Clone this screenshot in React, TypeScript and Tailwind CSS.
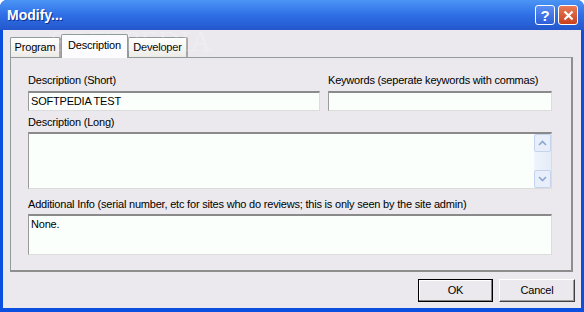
import { ReactNode } from "react";

const font = { fontFamily: '"Liberation Sans", Arial, sans-serif' };

const Sunken = ({ className, children }: { className: string; children?: ReactNode }) => (
	<div
		className={`border-t-2 border-l border-b border-r border-t-[#8a8a8a] border-l-[#9a9a9a] border-b-[#dcdcdc] border-r-[#dcdcdc] bg-[#fbfffb] ${className}`}
	>
		{children}
	</div>
);

const Chevron = ({ up }: { up?: boolean }) => (
	<svg width="9" height="6" viewBox="0 0 9 6">
		<path
			d={up ? "M1 5 L4.5 1.5 L8 5" : "M1 1 L4.5 4.5 L8 1"}
			fill="none"
			stroke="#8aa6d6"
			strokeWidth="1.6"
		/>
	</svg>
);

const Tab = ({ label, active, w }: { label: string; active?: boolean; w: string }) => (
	<div
		className={`${w} flex items-center justify-center border border-b-0 border-[#919b9c] rounded-t-[2px] text-black ${
			active
				? "h-[24px] -mb-px bg-[#fcfcfe] z-10 relative pb-[2px]"
				: "h-[20px] bg-gradient-to-b from-white to-[#ecebe6] border-r-2 border-r-[#a7a6aa]"
		}`}
	>
		{label}
	</div>
);

export default function App() {
	return (
		<div
			className="w-[584px] h-[312px] bg-[#0b4fe0] rounded-t-[7px] flex flex-col overflow-hidden relative text-[11px] tracking-[-0.2px]"
			style={font}
		>
			{/* title bar */}
			<div className="h-[30px] shrink-0 flex items-center pl-[7px] pr-[6px] bg-gradient-to-b from-[#4b95f5] via-[#2f6fe6] to-[#2457cc]">
				<span className="text-white font-bold text-[14px] tracking-normal [text-shadow:1px_1px_0_#0c2e8a]">Modify...</span>
				<div className="ml-auto flex gap-[3px]">
					<div className="w-[20px] h-[20px] rounded-[3px] border border-white bg-gradient-to-b from-[#5c8ff2] to-[#2c5fd8] flex items-center justify-center text-white font-bold text-[15px] leading-none">
						?
					</div>
					<div className="w-[20px] h-[20px] rounded-[3px] border border-white bg-gradient-to-b from-[#e77a55] to-[#c8401c] flex items-center justify-center">
						<svg width="11" height="11" viewBox="0 0 11 11">
							<path d="M1.5 1.5 L9.5 9.5 M9.5 1.5 L1.5 9.5" stroke="white" strokeWidth="2.2" />
						</svg>
					</div>
				</div>
			</div>

			{/* client */}
			<div className="flex-1 mx-[3px] mb-[4px] bg-[#ebe9ed] flex flex-col pt-[3px] pl-[7px] pr-[8px]">
				<div className="flex items-end h-[24px]">
					<Tab label="Program" w="w-[51px]" />
					<Tab label="Description" w="w-[67px]" active />
					<Tab label="Developer" w="w-[60px]" />
				</div>
				<div className="h-[215px] border-l border-t border-[#919b9c] border-r-2 border-b-2 border-r-[#8e8e8e] border-b-[#8e8e8e] bg-[#ebe9ed] pl-[17px] pr-[19px] pt-[15px] text-black">
					<div className="flex gap-[8px]">
						<div className="w-[292px]">
							<div className="h-[14px] leading-[14px]">Description (Short)</div>
							<Sunken className="h-[20px] mt-[4px] px-[2px] leading-[17px]">SOFTPEDIA TEST</Sunken>
						</div>
						<div className="w-[224px]">
							<div className="h-[14px] leading-[14px]">Keywords (seperate keywords with commas)</div>
							<Sunken className="h-[20px] mt-[4px]" />
						</div>
					</div>
					<div className="h-[14px] leading-[14px] mt-[4px]">Description (Long)</div>
					<Sunken className="h-[57px] mt-[3px] flex justify-end">
						<div className="w-[17px] flex flex-col bg-gradient-to-r from-[#f0f4fb] to-[#e4ecf8]">
							<div className="h-[18px] border border-[#c5d4ee] rounded-[2px] bg-[#e9effa] flex items-center justify-center">
								<Chevron up />
							</div>
							<div className="flex-1" />
							<div className="h-[18px] border border-[#c5d4ee] rounded-[2px] bg-[#e9effa] flex items-center justify-center">
								<Chevron />
							</div>
						</div>
					</Sunken>
					<div className="h-[14px] leading-[14px] mt-[8px]">
						Additional Info (serial number, etc for sites who do reviews; this is only seen by the site admin)
					</div>
					<Sunken className="h-[41px] mt-[3px] px-[2px] leading-[17px]">None.</Sunken>
				</div>
				<div className="flex justify-end gap-[6px] mt-[7px]">
					<div className="w-[75px] h-[23px] border border-black bg-[#ebe9ed] flex items-center justify-center shadow-[inset_-1px_-1px_0_#808080,inset_1px_1px_0_#ffffff]">
						OK
					</div>
					<div className="w-[76px] h-[23px] bg-[#ebe9ed] flex items-center justify-center border border-t-white border-l-white border-b-[#404040] border-r-[#404040] shadow-[inset_-1px_-1px_0_#a0a0a0] -mr-[2px]">
						Cancel
					</div>
				</div>
			</div>

			{/* watermark */}
			<div
				className="absolute left-[50px] top-[18px] text-[30px] tracking-normal text-white/20 pointer-events-none"
				style={{ fontFamily: '"Liberation Serif", serif' }}
			>
				SOFTPEDIA
			</div>
		</div>
	);
}
